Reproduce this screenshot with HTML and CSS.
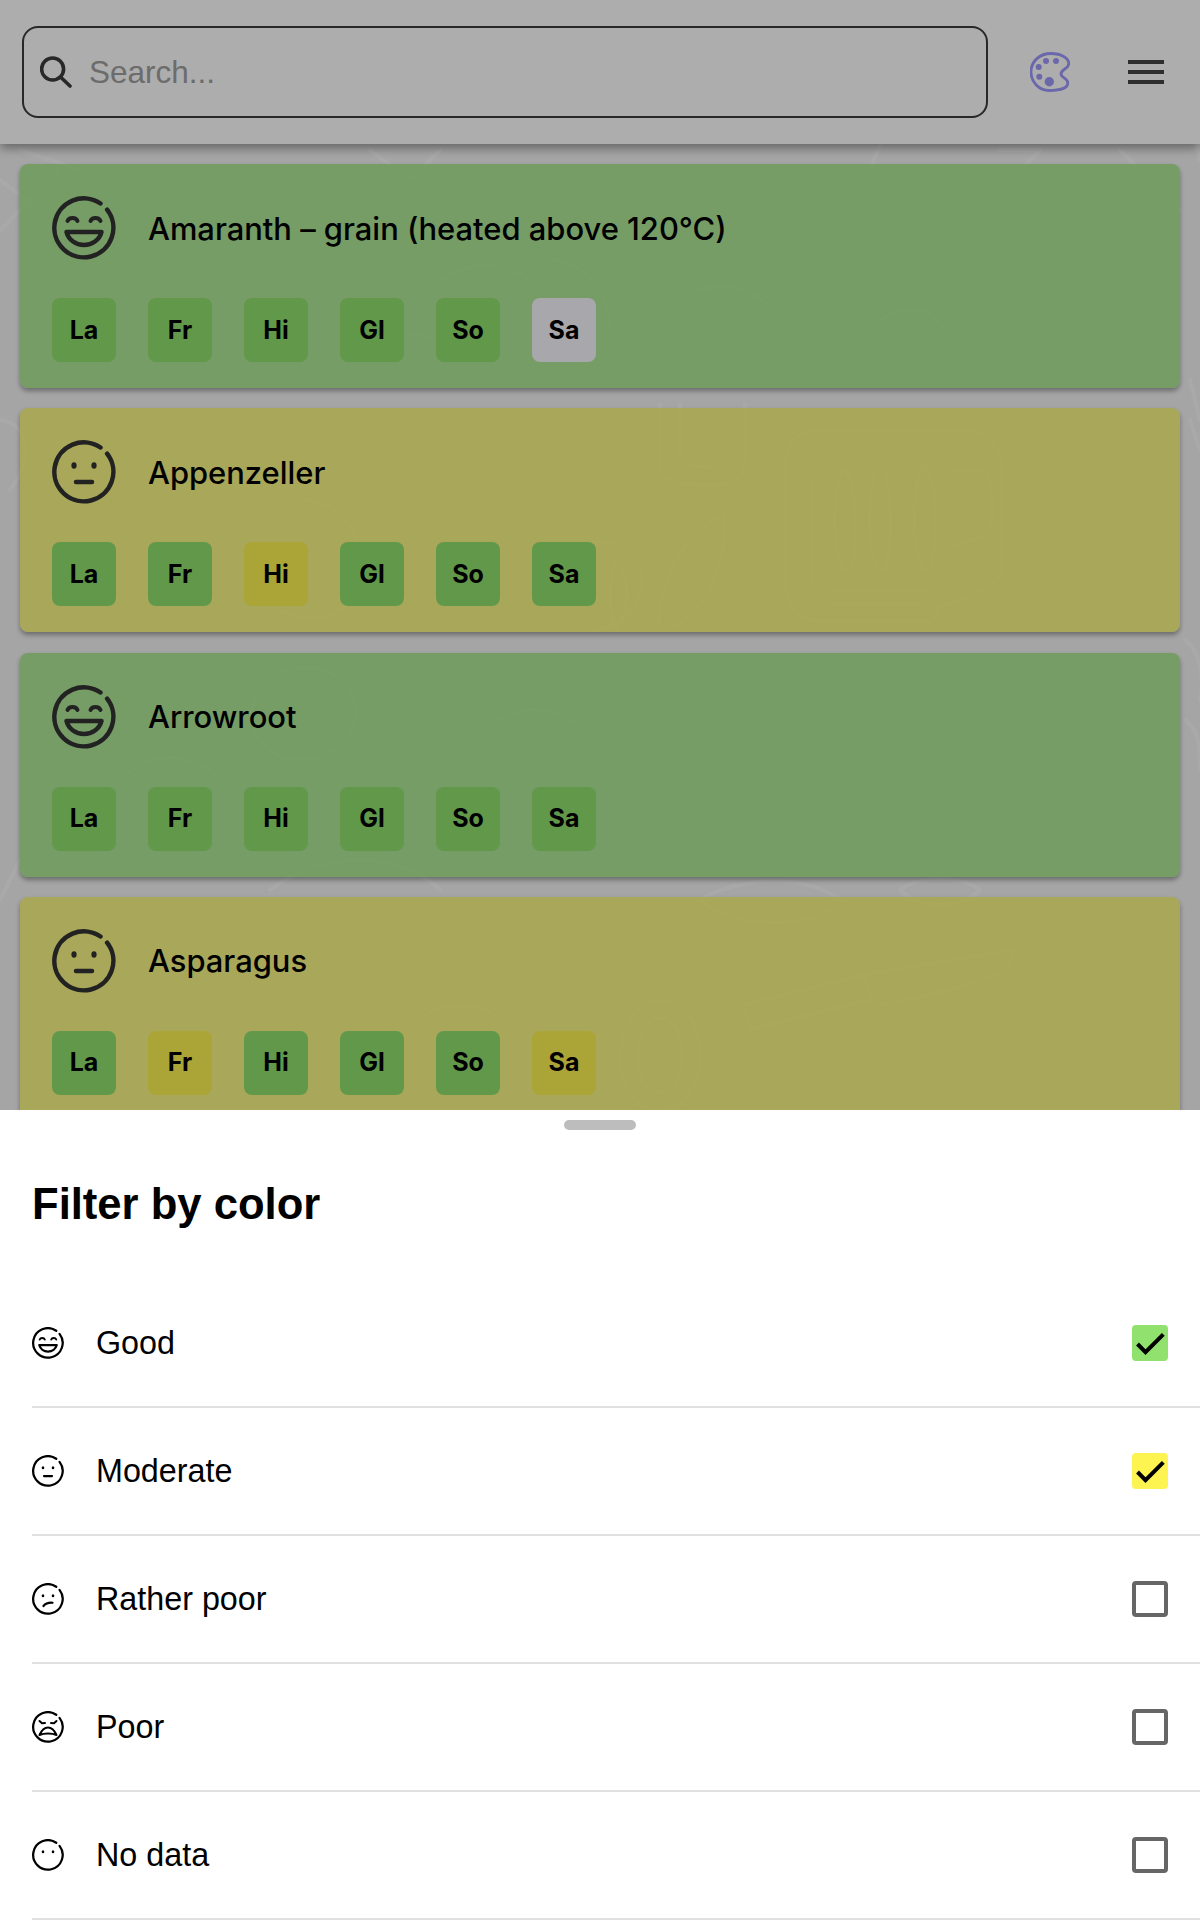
FILE: index.html
```html
<!DOCTYPE html>
<html lang="en">
<head>
<meta charset="utf-8">
<title>Food list</title>
<link rel="stylesheet" href="styles.css">
</head>
<body>
<svg class="defs" width="0" height="0" aria-hidden="true">
  <symbol id="face-good" viewBox="0 0 64 64">
    <path class="ln" d="M55.1 13.7A29.5 29.5 0 1 1 48.5 7.5"/>
    <path class="ln thin" d="M15.500 25c1.500-4 8.500-4 10 0M38.500 25c1.500-4 8.500-4 10 0"/>
    <path class="ln mouth" d="M14.500 36H49.500C47.500 44 40 49 32 49S16.500 44 14.500 36Z"/>
  </symbol>
  <symbol id="face-moderate" viewBox="0 0 64 64">
    <path class="ln" d="M55.1 13.7A29.5 29.5 0 1 1 48.5 7.5"/>
    <ellipse class="dot" cx="22" cy="25.500" rx="2.600" ry="3.200"/>
    <ellipse class="dot" cx="42" cy="25.500" rx="2.600" ry="3.200"/>
    <path class="ln" d="M24 42H40"/>
  </symbol>
  <symbol id="face-rather" viewBox="0 0 64 64">
    <path class="ln" d="M55.1 13.7A29.5 29.5 0 1 1 48.5 7.5"/>
    <ellipse class="dot" cx="22" cy="25.500" rx="2.600" ry="3.200"/>
    <ellipse class="dot" cx="42" cy="25.500" rx="2.600" ry="3.200"/>
    <path class="ln" d="M23 46C27 41 33 39 41 39.500"/>
  </symbol>
  <symbol id="face-poor" viewBox="0 0 64 64">
    <path class="ln" d="M55.1 13.7A29.5 29.5 0 1 1 48.5 7.5"/>
    <path class="ln thin" d="M15 20l5 4.500 6-.5M49 20l-5 4.500-6-.5"/>
    <path class="ln thin" d="M15 48C19 39 25 33 32 33S45 39 49 48C40 44 24 44 15 48Z"/>
  </symbol>
  <symbol id="face-none" viewBox="0 0 64 64">
    <path class="ln" d="M55.1 13.7A29.5 29.5 0 1 1 48.5 7.5"/>
    <ellipse class="dot" cx="22" cy="25.500" rx="2.600" ry="3.200"/>
    <ellipse class="dot" cx="42" cy="25.500" rx="2.600" ry="3.200"/>
  </symbol>
  <symbol id="tick" viewBox="0 0 36 36">
    <path class="tick-line" d="M5.500 19L13.500 27.200L31.300 9.300"/>
  </symbol>
</svg>

<div class="page">
  <svg class="doodles" viewBox="0 0 1200 1110" aria-hidden="true">
    <g class="doodle-lines">
      <path d="M785 465c0-22 12-34 32-34h150c20 0 35 16 35 42v92c0 22-32 32-62 42l-8 14H815c-18 0-30-18-30-44Z"/>
      <path d="M812 480v100M845 470c-14 10-14 90 0 100s14-90 0-100ZM880 465c-14 10-14 100 0 105s14-95 0-105ZM925 465c-14 10-14 100 0 105s14-95 0-105ZM950 470h30c8 0 12 10 12 30v20c0 16-20 20-42 28"/>
      <path d="M830 590h100M830 604h90"/>
      <path d="M660 405v60c0 15 15 20 35 20h30c15 0 20-15 20-30v-50M680 405v50c0 10 10 12 35 12"/>
      <path d="M725 515c-30 12-55 40-65 90-4 15 0 25 5 25 35-10 60-50 60-115ZM615 560c-6 25-6 50 0 70 14-16 18-50 0-70Z"/>
      <path d="M742 1005l120-30 10 24-120 30ZM862 975l150-25c5 20-10 30-130 55"/>
      <path d="M660 1000c-25 0-40 35-40 60s15 50 40 50 40-25 40-55-15-55-40-55ZM660 1018c-14 0-22 20-22 40s8 35 22 35 22-15 22-37-8-38-22-38Z"/>
      <path d="M700 900c40-25 110-25 140 0-20 30-110 30-140 0ZM900 890c20-15 60-15 80 0-20 20-60 20-80 0Z"/>
      <path d="M0 180l40 30M20 150l60 20M60 170l-60 60M370 150l40 30 30-30M880 145l-12 30M1000 150l40 0-30 30M1120 150l60 60M1190 380l10 40M1190 120l10 40"/>
      <path d="M0 420c20 0 40 30 10 70M1185 640c15 10 20 40 15 60M1185 720c15 10 15 30 15 50M0 900l20-40M1190 420l10 30"/>
      <path d="M300 500c40 0 60 30 60 70s-40 60-80 40M560 560c30-30 70-20 80 10s-20 60-50 60M270 890c50-40 130-40 170 0M420 1020c20-20 60-20 80 0M260 690c20-30 70-30 90 0s-10 70-50 70-60-40-40-70ZM500 720c30-20 70-10 90 20M120 780c30-30 70-30 100 0"/>
      <path d="M550 260c30 0 60 30 60 70M440 280c30-20 60-20 90 0M380 350c20-20 50-20 70 0M700 290c30-10 60 0 80 30M880 320c30-20 60-10 70 20"/>
    </g>
  </svg>

  <header class="topbar">
    <div class="search">
      <svg class="search-icon" viewBox="0 0 32 32" aria-hidden="true"><circle cx="12.600" cy="13" r="11"/><path d="M21 21.500L30 30"/></svg>
      <span class="search-hint">Search...</span>
    </div>
    <button class="icon-btn" type="button" aria-label="Colors">
      <svg class="palette" viewBox="0 0 40 40" aria-hidden="true">
        <path class="palette-outline" d="M19 38.500C9 38.500 1 30 1 20C1 9 10 1.500 21 1.500C31 1.500 38.800 6 38.800 11.500C38.800 17 31 17 31 22C31 26 37.800 26 37.800 31C37.800 36 30 38.500 19 38.500Z"/>
        <circle cx="8.700" cy="15" r="3"/><circle cx="16" cy="9" r="3"/><circle cx="26" cy="9" r="3"/><circle cx="9.300" cy="24.700" r="3"/><circle cx="19.300" cy="29.700" r="4.700"/>
      </svg>
    </button>
    <button class="icon-btn" type="button" aria-label="Menu">
      <span class="burger"><i></i><i></i><i></i></span>
    </button>
  </header>

  <main class="list">
    <article class="card good">
      <div class="card-head"><svg class="face-lg"><use href="#face-good"/></svg><h2>Amaranth – grain (heated above 120°C)</h2></div>
      <div class="chips"><span class="chip g">La</span><span class="chip g">Fr</span><span class="chip g">Hi</span><span class="chip g">Gl</span><span class="chip g">So</span><span class="chip n">Sa</span></div>
    </article>
    <article class="card moderate">
      <div class="card-head"><svg class="face-lg"><use href="#face-moderate"/></svg><h2>Appenzeller</h2></div>
      <div class="chips"><span class="chip g">La</span><span class="chip g">Fr</span><span class="chip y">Hi</span><span class="chip g">Gl</span><span class="chip g">So</span><span class="chip g">Sa</span></div>
    </article>
    <article class="card good">
      <div class="card-head"><svg class="face-lg"><use href="#face-good"/></svg><h2>Arrowroot</h2></div>
      <div class="chips"><span class="chip g">La</span><span class="chip g">Fr</span><span class="chip g">Hi</span><span class="chip g">Gl</span><span class="chip g">So</span><span class="chip g">Sa</span></div>
    </article>
    <article class="card moderate">
      <div class="card-head"><svg class="face-lg"><use href="#face-moderate"/></svg><h2>Asparagus</h2></div>
      <div class="chips"><span class="chip g">La</span><span class="chip y">Fr</span><span class="chip g">Hi</span><span class="chip g">Gl</span><span class="chip g">So</span><span class="chip y">Sa</span></div>
    </article>
  </main>

  <div class="scrim"></div>

  <section class="sheet">
    <div class="handle"></div>
    <h1>Filter by color</h1>
    <ul class="options">
      <li class="option"><svg class="face-sm"><use href="#face-good"/></svg><span class="option-label">Good</span><span class="box box-good"><svg class="tick"><use href="#tick"/></svg></span></li>
      <li class="option"><svg class="face-sm"><use href="#face-moderate"/></svg><span class="option-label">Moderate</span><span class="box box-moderate"><svg class="tick"><use href="#tick"/></svg></span></li>
      <li class="option"><svg class="face-sm"><use href="#face-rather"/></svg><span class="option-label">Rather poor</span><span class="box"></span></li>
      <li class="option"><svg class="face-sm"><use href="#face-poor"/></svg><span class="option-label">Poor</span><span class="box"></span></li>
      <li class="option"><svg class="face-sm"><use href="#face-none"/></svg><span class="option-label">No data</span><span class="box"></span></li>
    </ul>
  </section>
</div>
</body>
</html>
```
FILE: styles.css
```css
* { box-sizing: border-box; }

html, body {
  margin: 0;
  height: 1920px;
  overflow: hidden;
  background: #f4f4f4;
  font-family: "Liberation Sans", Arial, sans-serif;
  color: #000;
}

.defs { position: absolute; }

.page {
  position: relative;
  height: 1920px;
  overflow: hidden;
}

.doodles {
  position: absolute;
  left: 0;
  top: 0;
  width: 1200px;
  height: 1110px;
}

.doodle-lines {
  fill: none;
  stroke: #fff;
  stroke-opacity: 0.5;
  stroke-width: 4;
  stroke-linecap: round;
  stroke-linejoin: round;
}

/* top bar */
.topbar {
  position: relative;
  display: flex;
  align-items: center;
  gap: 14px;
  height: 144px;
  padding: 0 6px 0 22px;
  background: #fff;
  box-shadow: 0 4px 10px rgba(0, 0, 0, 0.4);
}

.search {
  flex: 1;
  display: flex;
  align-items: center;
  gap: 17px;
  height: 92px;
  padding: 0 16px;
  border: 2px solid #3c3c3c;
  border-radius: 16px;
}

.search-icon {
  width: 32px;
  height: 32px;
  fill: none;
  stroke: #3c3c3c;
  stroke-width: 3.600;
  stroke-linecap: round;
}

.search-hint {
  font-size: 31.500px;
  color: #a0a0a0;
}

.icon-btn {
  display: flex;
  align-items: center;
  justify-content: center;
  width: 96px;
  height: 96px;
  padding: 0;
  border: 0;
  background: none;
}

.icon-btn + .icon-btn { margin-left: -14px; }

.palette {
  width: 40px;
  height: 40px;
  fill: #9c99fb;
}

.palette-outline {
  fill: none;
  stroke: #9c99fb;
  stroke-width: 2.800;
}

.burger {
  display: flex;
  flex-direction: column;
  gap: 6px;
  width: 36px;
}

.burger i {
  display: block;
  height: 4px;
  background: #444;
}

/* cards */
.list {
  position: relative;
  display: flex;
  flex-direction: column;
  gap: 20.300px;
  padding: 20px;
}

.card {
  height: 224px;
  padding: 32px 32px 26px;
  border-radius: 8px;
  box-shadow: 0 3px 5px rgba(0, 0, 0, 0.35);
}

.good { background: rgba(144, 225, 110, 0.7); }
.moderate { background: rgba(251, 246, 84, 0.7); }

.card-head {
  display: flex;
  align-items: center;
  gap: 32px;
  height: 64px;
  margin-bottom: 38px;
}

.card-head h2 {
  margin: 0;
  font-family: Inter, "Liberation Sans", sans-serif;
  font-size: 30.900px;
  font-weight: 500;
  color: #000;
}

.face-lg {
  flex: none;
  width: 64px;
  height: 64px;
  color: #333;
}

.chips {
  display: flex;
  gap: 32px;
}

.chip {
  display: flex;
  align-items: center;
  justify-content: center;
  width: 64px;
  height: 64px;
  padding-bottom: 1px;
  border-radius: 8px;
  font-family: Inter, "Liberation Sans", sans-serif;
  font-size: 25px;
  font-weight: 700;
}

.g { background: #90e16e; }
.y { background: #fdf451; }
.n { background: #f8f8fe; }

.scrim {
  position: absolute;
  inset: 0;
  background: rgba(0, 0, 0, 0.32);
}

/* bottom sheet */
.sheet {
  position: absolute;
  left: 0;
  right: 0;
  top: 1110px;
  bottom: 0;
  padding-left: 32px;
  background: #fff;
}

.handle {
  width: 72px;
  height: 10px;
  margin: 10px auto 0 calc(50% - 52px);
  border-radius: 5px;
  background: #bdbdbd;
}

.sheet h1 {
  margin: 48px 0 0;
  font-size: 43.600px;
  line-height: 52px;
  font-weight: 700;
}

.options {
  margin: 50px 0 0;
  padding: 0;
  list-style: none;
}

.option {
  display: flex;
  align-items: center;
  height: 128px;
  padding: 0 32px 0 0;
  border-bottom: 2px solid #e0e0e0;
}

.face-sm {
  flex: none;
  width: 32px;
  height: 32px;
  margin-right: 32px;
  color: #000;
}

.option-label {
  flex: 1;
  font-size: 32.300px;
}

.box {
  width: 36px;
  height: 36px;
  border: 4px solid #666;
  border-radius: 4px;
}

.box-good { background: #90e16e; border: 0; }
.box-moderate { background: #fdf451; border: 0; }

.tick { display: block; width: 36px; height: 36px; }

.tick-line {
  fill: none;
  stroke: #000;
  stroke-width: 4;
}

.ln {
  fill: none;
  stroke: currentColor;
  stroke-width: 4.500;
  stroke-linecap: round;
  stroke-linejoin: round;
}

.thin { stroke-width: 4; }

.mouth { stroke-width: 4.500; }

.dot { fill: currentColor; }
```
